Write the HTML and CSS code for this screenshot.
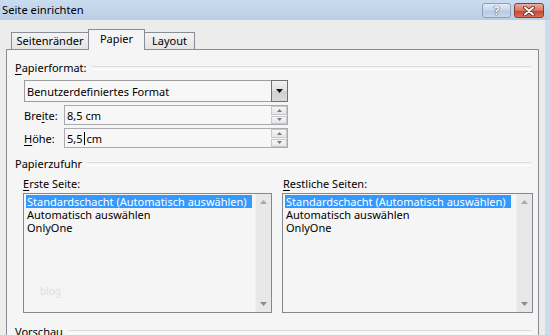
FILE: index.html
```html
<!DOCTYPE html>
<html lang="de">
<head>
    <meta charset="UTF-8">
    <meta name="viewport" content="width=device-width, initial-scale=1.0">
    <title>Seite einrichten</title>
    <link rel="stylesheet" href="styles.css">
</head>
<body>

<div class="window">
    <div class="titlebar">
        <span class="title">Seite einrichten</span>
        <div class="caption-buttons">
            <span class="cap-btn help">?</span>
            <span class="cap-btn close">
                <svg width="12" height="10" viewBox="0 0 12 10">
                    <path d="M2 1.5 L10 8.5 M10 1.5 L2 8.5" stroke="#5a1e14" stroke-width="3.6" stroke-linecap="round"/>
                    <path d="M2 1.5 L10 8.5 M10 1.5 L2 8.5" stroke="#fff" stroke-width="2" stroke-linecap="round"/>
                </svg>
            </span>
        </div>
    </div>

    <div class="client">
        <!-- Tabs -->
        <div class="tabs">
            <div class="tab tab-margins">Seitenränder</div>
            <div class="tab tab-paper active">Papier</div>
            <div class="tab tab-layout">Layout</div>
        </div>

        <div class="panel">
            <div class="group-title"><span><u>P</u>apierformat:</span></div>

            <div class="format-block">
                <div class="combo">
                    <span class="combo-text">Benutzerdefiniertes Format</span>
                    <span class="combo-btn">
                        <svg width="7" height="4" viewBox="0 0 7 4"><path d="M0 0 H7 L3.5 4 Z" fill="#111"/></svg>
                    </span>
                </div>

                <div class="field-row">
                    <label>Bre<u>i</u>te:</label>
                    <div class="spin-field">
                        <span class="value">8,5 cm</span>
                        <div class="spin">
                            <span class="spin-up"><svg width="5" height="3" viewBox="0 0 5 3"><path d="M0 3 H5 L2.5 0 Z" fill="#7a7a7a"/></svg></span>
                            <span class="spin-down"><svg width="5" height="3" viewBox="0 0 5 3"><path d="M0 0 H5 L2.5 3 Z" fill="#7a7a7a"/></svg></span>
                        </div>
                    </div>
                </div>

                <div class="field-row">
                    <label><u>H</u>öhe:</label>
                    <div class="spin-field">
                        <span class="value">5,5<span class="caret"></span>cm</span>
                        <div class="spin">
                            <span class="spin-up"><svg width="5" height="3" viewBox="0 0 5 3"><path d="M0 3 H5 L2.5 0 Z" fill="#7a7a7a"/></svg></span>
                            <span class="spin-down"><svg width="5" height="3" viewBox="0 0 5 3"><path d="M0 0 H5 L2.5 3 Z" fill="#7a7a7a"/></svg></span>
                        </div>
                    </div>
                </div>
            </div>

            <div class="group-title supply"><span>Papierzufuhr</span></div>

            <div class="trays">
                <div class="tray tray-first">
                    <div class="tray-label"><u>E</u>rste Seite:</div>
                    <div class="listbox">
                        <div class="items">
                            <div class="item"><span class="selected">Standardschacht (Automatisch auswählen)</span></div>
                            <div class="item">Automatisch auswählen</div>
                            <div class="item">OnlyOne</div>
                            <span class="watermark">blog</span>
                        </div>
                        <div class="scrollbar">
                            <svg width="7" height="4" viewBox="0 0 7 4"><path d="M0 4 H7 L3.5 0 Z" fill="#a8a8a8"/></svg>
                            <svg width="7" height="4" viewBox="0 0 7 4"><path d="M0 0 H7 L3.5 4 Z" fill="#8c8c8c"/></svg>
                        </div>
                    </div>
                </div>

                <div class="tray tray-rest">
                    <div class="tray-label"><u>R</u>estliche Seiten:</div>
                    <div class="listbox">
                        <div class="items">
                            <div class="item"><span class="selected">Standardschacht (Automatisch auswählen)</span></div>
                            <div class="item">Automatisch auswählen</div>
                            <div class="item">OnlyOne</div>
                        </div>
                        <div class="scrollbar">
                            <svg width="7" height="4" viewBox="0 0 7 4"><path d="M0 4 H7 L3.5 0 Z" fill="#a8a8a8"/></svg>
                            <svg width="7" height="4" viewBox="0 0 7 4"><path d="M0 0 H7 L3.5 4 Z" fill="#8c8c8c"/></svg>
                        </div>
                    </div>
                </div>
            </div>

            <div class="group-title preview"><span>Vorschau</span></div>
        </div>
    </div>
</div>

</body>
</html>
```

FILE: styles.css
```css
* {
    margin: 0;
    padding: 0;
    box-sizing: border-box;
}

body {
    width: 550px;
    height: 335px;
    overflow: hidden;
    font-family: "Noto Sans", "Open Sans", sans-serif;
    font-size: 11px;
    color: #000;
    background: #c9dbee;
}

u {
    text-decoration-thickness: 1px;
    text-underline-offset: 2px;
}

.window {
    width: 550px;
    height: 335px;
    display: flex;
    flex-direction: column;
}

/* Title bar */
.titlebar {
    height: 20px;
    display: flex;
    justify-content: space-between;
    align-items: flex-start;
    background: linear-gradient(#cadcef, #b9cee6);
}

.title {
    font-size: 11.2px;
    line-height: 20px;
    padding-left: 2px;
}

.caption-buttons {
    display: flex;
    gap: 3px;
    margin-top: 3px;
    margin-right: 6px;
}

.cap-btn {
    height: 15px;
    border-radius: 3px;
    display: flex;
    align-items: center;
    justify-content: center;
}

.help {
    width: 29px;
    border: 1px solid #8aa0bb;
    background: linear-gradient(#e4ecf6, #c3d4e8 50%, #b3c7df 51%, #c9daee);
    color: #fff;
    font-size: 12px;
    font-weight: bold;
    line-height: 13px;
    text-shadow: 0 0 1px #1d3552, 0 0 1px #1d3552;
}

.close {
    width: 30px;
    border: 1px solid #8d3b2e;
    background: linear-gradient(#eab0a2, #d7745f 50%, #c4432d 51%, #d9705a);
}

/* Client area */
.client {
    flex: 1;
    width: 545px;
    background: #ececec;
    padding: 9px 6px 0 6px;
    display: flex;
    flex-direction: column;
}

.tabs {
    display: flex;
    align-items: flex-end;
    height: 21px;
    margin-left: 5px;
    margin-bottom: -1px;
    position: relative;
    z-index: 1;
}

.tab {
    height: 18px;
    border: 1px solid #898c95;
    background: linear-gradient(#f3f3f3, #e4e4e4);
    text-align: center;
    line-height: 16px;
}

.tab + .tab {
    margin-left: -1px;
}

.tab-margins {
    width: 78px;
}

.tab-paper {
    width: 57px;
}

.tab-layout {
    width: 51px;
}

.tab.active {
    height: 21px;
    border-bottom: none;
    background: #f5f5f5;
    line-height: 18px;
    position: relative;
    z-index: 2;
}

.panel {
    flex: 1;
    border: 1px solid #898c95;
    border-bottom: none;
    background: #f5f5f5;
    padding: 10px 0 0 8px;
}

/* Group headers with etched line */
.group-title {
    display: flex;
    align-items: center;
    gap: 5px;
    height: 15px;
    line-height: 15px;
}

.group-title::after {
    content: "";
    flex: 1;
    height: 2px;
    border-top: 1px solid #dadde0;
    border-bottom: 1px solid #fff;
    margin-right: 7px;
}

.group-title.supply {
    margin-top: 8px;
}

.group-title.preview {
    margin-top: 11px;
}

/* Paper format */
.format-block {
    margin: 5px 0 0 9px;
}

.combo {
    width: 264px;
    height: 22px;
    border: 1px solid #9c9c9c;
    background: #f7f7f7;
    display: flex;
    justify-content: space-between;
    align-items: center;
}

.combo-text {
    padding-left: 2px;
}

.combo-btn {
    width: 17px;
    height: 22px;
    margin: -1px -1px -1px 0;
    border: 1px solid #707070;
    background: linear-gradient(#f2f2f2, #e0e0e0 50%, #cfcfcf 51%, #dadada);
    display: flex;
    align-items: center;
    justify-content: center;
}

.field-row {
    display: flex;
    align-items: center;
    margin-top: 3px;
    height: 20px;
}

.field-row label {
    width: 40px;
}

.spin-field {
    width: 224px;
    height: 20px;
    border: 1px solid #a9abb0;
    background: #f7f7f7;
    display: flex;
    align-items: center;
}

.value {
    flex: 1;
    padding-left: 2px;
    display: flex;
    align-items: center;
}

.caret {
    width: 1px;
    height: 13px;
    background: #000;
    margin: 0 2px 0 1px;
}

.spin {
    width: 16px;
    height: 18px;
    display: flex;
    flex-direction: column;
    gap: 1px;
}

.spin span {
    flex: 1;
    border: 1px solid #c5c8cc;
    background: linear-gradient(#f6f6f6, #e6e6e6);
    display: flex;
    align-items: center;
    justify-content: center;
}

/* Paper source */
.trays {
    display: flex;
    gap: 10px;
    margin: 5px 0 0 8px;
}

.tray-first {
    width: 249px;
}

.tray-rest {
    width: 251px;
}

.tray-label {
    height: 15px;
    line-height: 15px;
    margin-bottom: 2px;
}

.tray-rest .tray-label {
    padding-left: 1px;
}

.listbox {
    height: 120px;
    border: 1px solid #828790;
    background: #f5f5f5;
    display: flex;
}

.items {
    flex: 1;
    padding: 1px 0 0 1px;
    position: relative;
}

.item {
    height: 13px;
    line-height: 13px;
    padding-left: 2px;
}

.selected {
    display: inline-block;
    margin-left: -1px;
    padding: 0 5px 0 1px;
    background: #3399ff;
    color: #fff;
}

.scrollbar {
    width: 16px;
    background: #e8e8e8;
    border-left: 1px solid #f0f0f0;
    display: flex;
    flex-direction: column;
    justify-content: space-between;
    align-items: center;
    padding: 6px 0 6px;
}

.watermark {
    position: absolute;
    left: 16px;
    top: 90px;
    font-size: 10px;
    color: #dedede;
}
```
